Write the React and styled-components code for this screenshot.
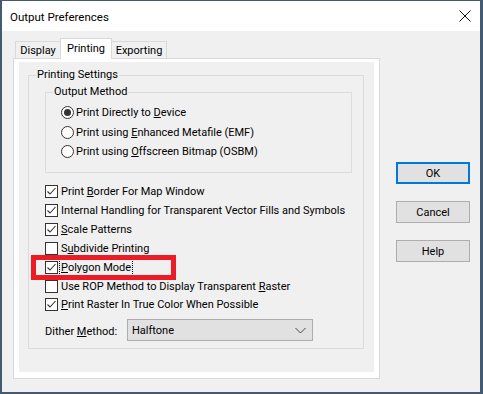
import styled, { createGlobalStyle } from 'styled-components';

const Global = createGlobalStyle`
html, body {
    margin: 0;
    padding: 0;
    background: #435a70;
}
body {
    font-family: Roboto, 'Noto Sans', sans-serif;
    font-size: 11px;
    color: #000;
    white-space: nowrap;
}
`

function Check({ on }) {
    return (
        <CheckBox>
            {on && (
                <svg width="11" height="11" viewBox="0 0 11 11">
                    <path d="M1.5 5.5 L4 8 L9.5 2" fill="none" stroke="#333" strokeWidth="1.1" />
                </svg>
            )}
        </CheckBox>
    )
}

function Radio({ on }) {
    return <RadioDot $on={on} />
}

const options = [
    { on: true, label: <>Print Directly to <u>D</u>evice</> },
    { on: false, label: <>Print using <u>E</u>nhanced Metafile (EMF)</> },
    { on: false, label: <>Print using <u>O</u>ffscreen Bitmap (OSBM)</> },
]

const checks = [
    { on: true, label: <>Print <u>B</u>order For Map Window</> },
    { on: true, label: <>Internal Handling for Transparent Vector Fills and Symbols</> },
    { on: true, label: <><u>S</u>cale Patterns</> },
    { on: false, label: <>S<u>u</u>bdivide Printing</> },
    { on: true, label: <><u>P</u>olygon Mode</>, focus: true },
    { on: false, label: <>Use ROP Method to Display Transparent <u>R</u>aster</> },
    { on: true, label: <><u>P</u>rint Raster In True Color When Possible</> },
]

export default function App() {
    return (
        <Window>
            <Global />
            <TitleBar>
                <span>Output Preferences</span>
                <svg width="12" height="12" viewBox="0 0 12 12">
                    <path d="M0.5 0.5 L11.5 11.5 M11.5 0.5 L0.5 11.5" stroke="#111" strokeWidth="1" />
                </svg>
            </TitleBar>
            <Body>
                <TabControl>
                    <TabStrip>
                        <Tab $w={46}>Display</Tab>
                        <Tab $w={52} $active>Printing</Tab>
                        <Tab $w={56}>Exporting</Tab>
                    </TabStrip>
                    <TabPage>
                        <PageInner>
                            <Group $outer>
                                <Caption>Printing Settings</Caption>
                                <Group>
                                    <Caption>Output Method</Caption>
                                    {options.map((o, i) => (
                                        <RadioRow key={i}>
                                            <Radio on={o.on} />
                                            <span>{o.label}</span>
                                        </RadioRow>
                                    ))}
                                </Group>
                                <CheckList>
                                    {checks.map((c, i) => (
                                        <CheckRow key={i}>
                                            <Check on={c.on} />
                                            <RowText $focus={c.focus}>{c.label}</RowText>
                                            {c.focus && <Highlight />}
                                        </CheckRow>
                                    ))}
                                </CheckList>
                                <DitherRow>
                                    <Label>Dither <u>M</u>ethod:</Label>
                                    <Select>
                                        <span>Halftone</span>
                                        <svg width="11" height="7" viewBox="0 0 11 7">
                                            <path d="M0.5 1 L5.5 6 L10.5 1" fill="none" stroke="#444" strokeWidth="1" />
                                        </svg>
                                    </Select>
                                </DitherRow>
                            </Group>
                        </PageInner>
                    </TabPage>
                </TabControl>
                <Buttons>
                    <Button $default>OK</Button>
                    <Button>Cancel</Button>
                    <Button>Help</Button>
                </Buttons>
            </Body>
        </Window>
    )
}

const Window = styled.div`
width: 478px;
height: 391px;
margin: 1px 3px 2px 2px;
background: #f0f0f0;
display: flex;
flex-direction: column;
`
const TitleBar = styled.div`
height: 30px;
background: #ffffff;
display: flex;
align-items: center;
justify-content: space-between;
padding: 0 8px 0 8px;
font-size: 11.5px;
span{
    margin-top: 1px;
}
svg{
    margin-right: 1px;
}
`
const Body = styled.div`
display: flex;
padding: 7px 0 0 11px;
`
const TabControl = styled.div`
width: 367px;
display: flex;
flex-direction: column;
`
const TabStrip = styled.div`
height: 20px;
display: flex;
align-items: flex-end;
padding-left: 2px;
`
const Tab = styled.div`
position: relative;
box-sizing: border-box;
width: ${p => p.$w}px;
height: ${p => p.$active ? 21 : 17}px;
margin: ${p => p.$active ? '0 -1px -1px -1px' : '0'};
z-index: ${p => p.$active ? 1 : 0};
background: ${p => p.$active ? '#ffffff' : '#f0f0f0'};
border: 1px solid #d9d9d9;
border-bottom: none;
display: flex;
justify-content: center;
align-items: ${p => p.$active ? 'flex-start' : 'center'};
padding-top: ${p => p.$active ? '2px' : '1px'};
line-height: 15px;
`
const TabPage = styled.div`
box-sizing: border-box;
height: 321px;
border: 1px solid #d9d9d9;
background: #ffffff;
padding: 3px 5px 6px 5px;
`
const PageInner = styled.div`
height: 100%;
background: #f0f0f0;
padding: 13px 10px 0 9px;
box-sizing: border-box;
`
const Group = styled.div`
position: relative;
border: 1px solid #dcdcdc;
padding: ${p => p.$outer ? '16px 11px 7px 16px' : '10px 0 10px 15px'};
margin: 0;
`
const Caption = styled.div`
position: absolute;
top: -9px;
left: 7px;
padding: 0 1px;
background: #f0f0f0;
line-height: 16px;
`
const RadioRow = styled.div`
height: 19.5px;
display: flex;
align-items: center;
gap: 2px;
`
const RadioDot = styled.div`
box-sizing: border-box;
width: 13px;
height: 13px;
border-radius: 50%;
border: 1px solid #333;
background: #fff;
display: flex;
align-items: center;
justify-content: center;
&::after{
    content: '';
    width: 7px;
    height: 7px;
    border-radius: 50%;
    background: ${p => p.$on ? '#333' : 'transparent'};
}
`
const CheckList = styled.div`
margin-top: 10px;
`
const CheckRow = styled.div`
position: relative;
height: 18.85px;
display: flex;
align-items: center;
gap: 2px;
`
const CheckBox = styled.div`
box-sizing: border-box;
width: 13px;
height: 13px;
border: 1px solid #333;
background: #fff;
display: flex;
align-items: center;
justify-content: center;
`
const RowText = styled.span`
line-height: 15px;
padding: 0 1px;
outline: ${p => p.$focus ? '1px dotted #000' : 'none'};
`
const Highlight = styled.div`
position: absolute;
left: -14px;
top: -3px;
width: 145px;
height: 25px;
box-sizing: border-box;
border: 5px solid #ed1c24;
pointer-events: none;
`
const DitherRow = styled.div`
display: flex;
align-items: center;
margin-top: 5px;
`
const Label = styled.span`
width: 82px;
margin-top: 3px;
`
const Select = styled.div`
box-sizing: border-box;
width: 186px;
height: 22px;
background: #e1e1e1;
border: 1px solid #adadad;
display: flex;
align-items: center;
justify-content: space-between;
padding: 0 6px 0 4px;
`
const Buttons = styled.div`
display: flex;
flex-direction: column;
gap: 17px;
margin-left: 16px;
margin-top: 124px;
`
const Button = styled.div`
box-sizing: border-box;
width: 74px;
height: 22px;
background: #e1e1e1;
border: ${p => p.$default ? '2px solid #0078d7' : '1px solid #adadad'};
display: flex;
align-items: center;
justify-content: center;
`
